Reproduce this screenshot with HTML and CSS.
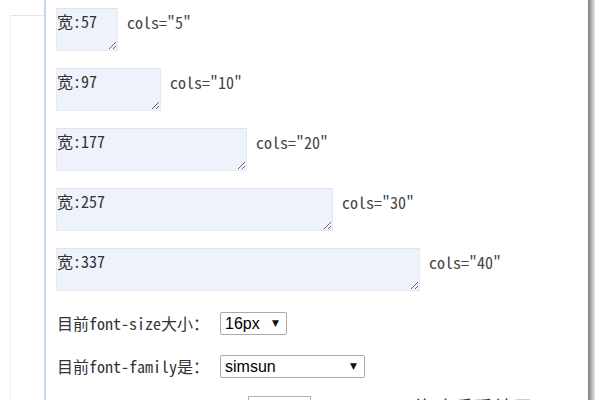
FILE: index.html
```html
<!DOCTYPE html>
<html lang="zh-CN">
<head>
  <meta charset="UTF-8">
  <title>textarea cols 宽度测试</title>
  <link rel="stylesheet" href="styles.css">
</head>
<body>

<div class="page">
  <div class="side">
    <div class="rail"><div class="tick"></div></div>
  </div>

  <div class="panel">
    <div class="row"><textarea class="ta c5" cols="5">宽:57</textarea><span class="note">cols="5"</span></div>
    <div class="row"><textarea class="ta c10" cols="10">宽:97</textarea><span class="note">cols="10"</span></div>
    <div class="row"><textarea class="ta c20" cols="20">宽:177</textarea><span class="note">cols="20"</span></div>
    <div class="row"><textarea class="ta c30" cols="30">宽:257</textarea><span class="note">cols="30"</span></div>
    <div class="row"><textarea class="ta c40" cols="40">宽:337</textarea><span class="note">cols="40"</span></div>

    <div class="field first">
      <span class="label">目前font-size大小：</span>
      <span class="pick">
        <select class="sel size">
          <option>16px</option>
          <option>14px</option>
          <option>12px</option>
        </select>
      </span>
    </div>

    <div class="field">
      <span class="label">目前font-family是：</span>
      <span class="pick">
        <select class="sel family">
          <option>simsun</option>
          <option>monospace</option>
          <option>microsoft yahei</option>
        </select>
      </span>
    </div>

    <div class="field last">
      <span class="label">目前letter-spacing：</span>
      <input class="num" type="text" value="0">
      <span class="hint">修改后看效果</span>
    </div>
  </div>
  <div class="edge"></div>
</div>

</body>
</html>
```

FILE: styles.css
```css
body {
  margin: 0;
  background: #fff;
  color: #333;
  font-family: "Noto Sans Mono CJK SC", "Liberation Mono", "Noto Sans CJK SC", monospace;
  font-size: 16px;
}
.page {
  display: flex;
  height: 400px;
  overflow: hidden;
}
.side {
  width: 34px;
  padding-left: 10px;
}
.rail {
  height: 100%;
  border-left: 1px solid #eeeeee;
}
.tick {
  margin-top: 15px;
  width: 33px;
  border-top: 1px dotted #cfcfcf;
}
.panel {
  width: 544px;
  box-sizing: border-box;
  border-left: 2px solid #c8d5f1;
  padding: 8px 0 0 10px;
}
.edge {
  width: 7px;
  background: linear-gradient(to right, #7c7c7c, #a8a8a8 40%, #e6e6e6);
}
.row {
  display: flex;
  align-items: flex-start;
  gap: 9px;
  margin-bottom: 17px;
}
.ta {
  box-sizing: border-box;
  height: 43px;
  margin: 0;
  padding: 3px 0 0;
  border: 1px solid #e3e9f5;
  border-top-color: #dbe3f3;
  background: #eef2fa;
  color: #333;
  font: inherit;
  line-height: 18px;
  resize: both;
}
.c5 { width: 62px; }
.c10 { width: 105px; }
.c20 { width: 191px; }
.c30 { width: 277px; }
.c40 { width: 364px; }
.note {
  margin-top: 5px;
  line-height: 18px;
  color: #444;
}
.field {
  display: flex;
  align-items: center;
  margin-top: 20px;
  padding-left: 1px;
}
.field.first {
  margin-top: 21px;
}
.field.last {
  margin-top: 18px;
}
.label {
  width: 163px;
  line-height: 23px;
}
.pick {
  position: relative;
  display: inline-block;
}
.pick::after {
  content: "▼";
  position: absolute;
  right: 8px;
  top: 6px;
  font-family: "DejaVu Sans", sans-serif;
  font-size: 9px;
  color: #111;
  pointer-events: none;
}
.sel {
  appearance: none;
  -webkit-appearance: none;
  box-sizing: border-box;
  display: block;
  height: 23px;
  margin: 0;
  padding: 0 0 0 4px;
  border: 1px solid #a9a9a9;
  border-radius: 2px;
  background: #fff;
  color: #000;
  font-family: "Liberation Sans", Arial, sans-serif;
  font-size: 16px;
}
.size { width: 67px; }
.family { width: 145px; }
.num {
  box-sizing: border-box;
  width: 63px;
  height: 30px;
  margin-left: 28px;
  border: 1px solid #b0b0b0;
  font: inherit;
}
.hint {
  align-self: flex-start;
  margin: 0 0 0 102px;
  font-family: "Noto Sans CJK SC", sans-serif;
  font-size: 20px;
  line-height: 24px;
}
```
